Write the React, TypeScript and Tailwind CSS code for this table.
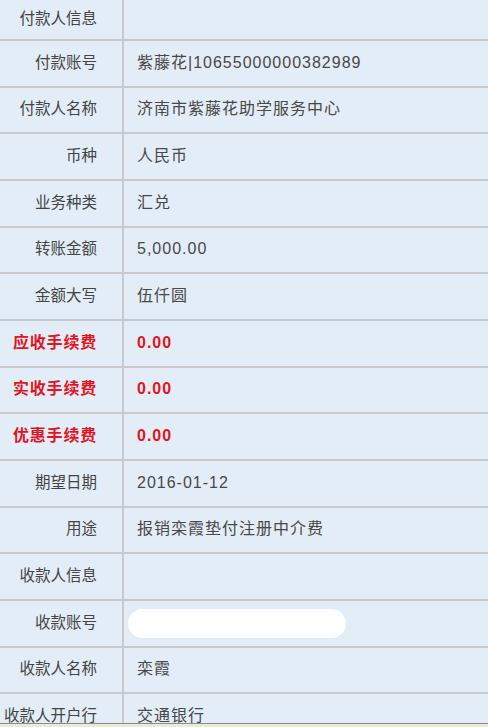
import React from "react";

type Row = { label: string; value?: string; red?: boolean; redact?: boolean };

const rows: Row[] = [
  { label: "付款人信息" },
  { label: "付款账号", value: "紫藤花|10655000000382989" },
  { label: "付款人名称", value: "济南市紫藤花助学服务中心" },
  { label: "币种", value: "人民币" },
  { label: "业务种类", value: "汇兑" },
  { label: "转账金额", value: "5,000.00" },
  { label: "金额大写", value: "伍仟圆" },
  { label: "应收手续费", value: "0.00", red: true },
  { label: "实收手续费", value: "0.00", red: true },
  { label: "优惠手续费", value: "0.00", red: true },
  { label: "期望日期", value: "2016-01-12" },
  { label: "用途", value: "报销栾霞垫付注册中介费" },
  { label: "收款人信息" },
  { label: "收款账号", redact: true },
  { label: "收款人名称", value: "栾霞" },
  { label: "收款人开户行", value: "交通银行" },
];

const heightClasses = ["h-[47px]", "h-[46px]", "h-[47px]"];

export default function App() {
  return (
    <div
      className="w-[488px] h-[727px] overflow-hidden bg-[#e3edf7] flex flex-col"
      style={{ fontFamily: '"Liberation Sans", "Noto Sans CJK SC", sans-serif' }}
    >
      <div className="h-[723px] overflow-hidden flex flex-col shrink-0">
        {rows.map((r, i) => {
          const hc = i === 0 ? "h-[39px]" : `border-t-2 border-[#c7c9cc] ${heightClasses[(i - 1) % 3]}`;
          return (
            <div key={i} className={`flex shrink-0 ${hc}`}>
              <div className="w-[124px] shrink-0 border-r-2 border-[#c7c9cc] flex items-center justify-end pr-[25px] pb-[2px]">
                <span
                  className={
                    r.red
                      ? "text-[16px] font-bold text-[#e3141e] tracking-[0.8px] whitespace-nowrap"
                      : "text-[15.5px] text-[#444444] whitespace-nowrap"
                  }
                >
                  {r.label}
                </span>
              </div>
              <div className="flex-1 flex items-center pl-[13px] pb-[2px]">
                {r.redact ? (
                  <div className="w-[218px] h-[29px] rounded-full bg-white -ml-[9px] mt-[1px]" />
                ) : r.value ? (
                  <span
                    className={
                      r.red
                        ? "text-[16px] font-bold text-[#e3141e] tracking-[1px] whitespace-nowrap"
                        : "text-[16px] text-[#484848] tracking-[1px] whitespace-nowrap"
                    }
                  >
                    {r.value}
                  </span>
                ) : null}
              </div>
            </div>
          );
        })}
      </div>
      <div className="h-[1px] bg-[#8c8c8c] shrink-0" />
      <div className="flex-1 bg-[#ece9d8]" />
    </div>
  );
}
